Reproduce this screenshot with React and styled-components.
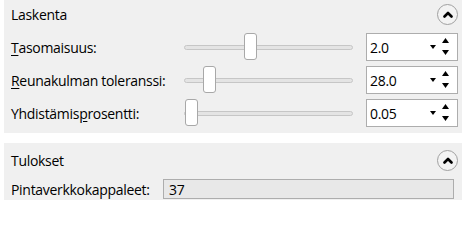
import React from 'react';
import styled, { createGlobalStyle } from 'styled-components';

const GlobalStyle = createGlobalStyle`
    html, body {
        margin: 0;
        padding: 0;
        background: #ffffff;
        overflow: hidden;
    }
    body {
        font-family: "Open Sans", "Noto Sans", sans-serif;
        font-size: 14px;
        letter-spacing: -0.3px;
        color: #000000;
    }
`;

const Page = styled.div`
    width: 468px;
    height: 200px;
    padding: 0 6px 0 4px;
    box-sizing: border-box;
    display: flex;
    flex-direction: column;
    gap: 10px;
    overflow: hidden;
`;

const Panel = styled.section`
    background: #f0f0f0;
    padding: 3px 4px 6px 7px;
    display: flex;
    flex-direction: column;
    gap: 5px;
    margin-top: ${props => props.offset || 0}px;
    flex-shrink: 0;
`;

const PanelHeader = styled.div`
    height: 28px;
    display: flex;
    align-items: center;
    justify-content: space-between;
`;

const PanelTitle = styled.span``;

const CollapseButton = styled.button`
    width: 21px;
    height: 21px;
    border-radius: 50%;
    border: 1px solid #a0a0a0;
    background: #f3f3f3;
    padding: 0;
    display: flex;
    align-items: center;
    justify-content: center;
    cursor: pointer;
`;

const Rows = styled.div`
    display: flex;
    flex-direction: column;
    gap: 5px;
`;

const Row = styled.div`
    height: 28px;
    display: grid;
    grid-template-columns: 173px 169px 1fr;
    align-items: center;
`;

const Label = styled.label`
    white-space: nowrap;
    u {
        text-decoration: underline;
        text-underline-offset: 2px;
    }
`;

const SliderWrapper = styled.div`
    position: relative;
    height: 28px;
    display: flex;
    align-items: center;
`;

const SliderTrack = styled.div`
    width: 100%;
    height: 3px;
    border: 1px solid #c6c6c6;
    background: #e4e4e4;
    border-radius: 3px;
`;

const SliderThumb = styled.div`
    position: absolute;
    top: 0;
    width: 11px;
    height: 25px;
    background: #ffffff;
    border: 1px solid #a8a8a8;
    border-radius: 3px;
`;

const SpinBox = styled.div`
    margin-left: 13px;
    height: 28px;
    box-sizing: border-box;
    background: #ffffff;
    border: 1px solid #adadad;
    display: flex;
    align-items: center;
    padding: 0 8px 0 3px;
`;

const SpinValue = styled.span`
    flex: 1;
`;

const SpinButtons = styled.div`
    display: flex;
    align-items: center;
    gap: 6px;
`;

const ResultRow = styled.div`
    display: grid;
    grid-template-columns: 152px 1fr;
    align-items: center;
    padding-right: 4px;
`;

const ReadOnlyField = styled.div`
    height: 20px;
    box-sizing: border-box;
    background: #e8e8e8;
    border: 1px solid #adadad;
    display: flex;
    align-items: center;
    padding-left: 5px;
`;

const ChevronUp = () => (
    <svg width="10" height="7" viewBox="0 0 10 7">
        <path d="M1.5 5.5 L5 2 L8.5 5.5" fill="none" stroke="#000" strokeWidth="2.6" strokeLinecap="round" strokeLinejoin="round" />
    </svg>
);

const SpinArrows = () => (
    <SpinButtons>
        <svg width="6" height="4" viewBox="0 0 6 4">
            <path d="M0 0 H6 L3 4 Z" fill="#000" />
        </svg>
        <svg width="7" height="18" viewBox="0 0 7 18">
            <path d="M3.5 0 L7 5 H0 Z" fill="#000" />
            <path d="M0 12 H7 L3.5 17 Z" fill="#000" />
        </svg>
    </SpinButtons>
);

const Slider = ({ fraction }) => (
    <SliderWrapper>
        <SliderTrack />
        <SliderThumb style={{ left: `${fraction * 156}px` }} />
    </SliderWrapper>
);

const settings = [
    { pre: '', key: 'T', post: 'asomaisuus:', fraction: 0.385, value: '2.0' },
    { pre: '', key: 'R', post: 'eunakulman toleranssi:', fraction: 0.12, value: '28.0' },
    { pre: 'Yhdistämis', key: 'p', post: 'rosentti:', fraction: 0.006, value: '0.05' },
];

const App = () => {
    return (
        <>
            <GlobalStyle />
            <Page>
                <Panel offset={-3}>
                    <PanelHeader>
                        <PanelTitle>Laskenta</PanelTitle>
                        <CollapseButton><ChevronUp /></CollapseButton>
                    </PanelHeader>
                    <Rows>
                        {settings.map((s, i) => (
                            <Row key={i}>
                                <Label>{s.pre}<u>{s.key}</u>{s.post}</Label>
                                <Slider fraction={s.fraction} />
                                <SpinBox>
                                    <SpinValue>{s.value}</SpinValue>
                                    <SpinArrows />
                                </SpinBox>
                            </Row>
                        ))}
                    </Rows>
                </Panel>
                <Panel>
                    <PanelHeader>
                        <PanelTitle>Tulokset</PanelTitle>
                        <CollapseButton><ChevronUp /></CollapseButton>
                    </PanelHeader>
                    <ResultRow>
                        <Label>Pintaverkkokappaleet:</Label>
                        <ReadOnlyField>37</ReadOnlyField>
                    </ResultRow>
                </Panel>
            </Page>
        </>
    );
};

export default App;
